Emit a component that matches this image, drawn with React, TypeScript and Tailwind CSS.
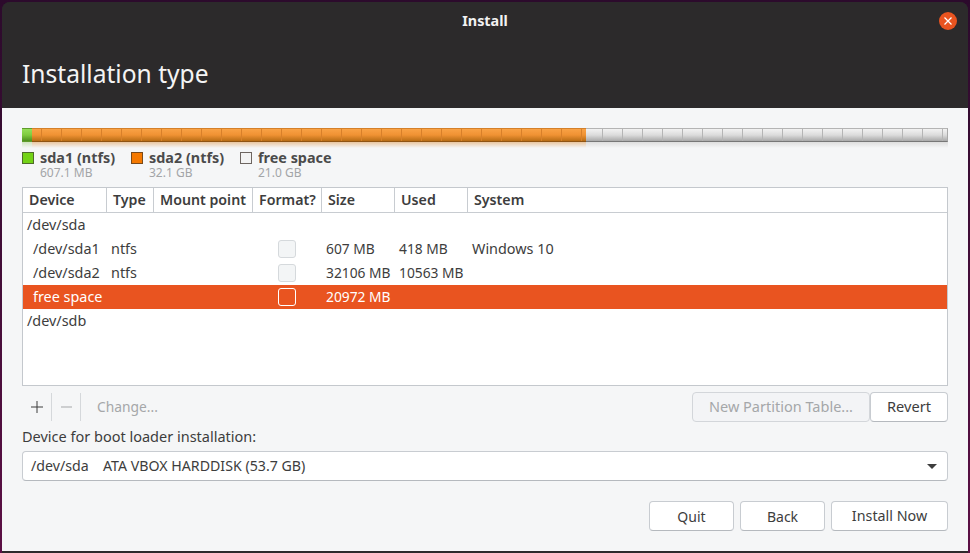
import React from "react";

const font = "font-['Noto_Sans','Open_Sans',sans-serif]";

const columns = "grid grid-cols-[84px_47px_99px_69px_73px_73px_1fr]";

const Checkbox = ({ selected }: { selected?: boolean }) => (
  <div className="flex justify-center -ml-[5px]">
    <div
      className={
        selected
          ? "w-[18px] h-[18px] rounded-[3px] border border-white bg-[#e95420]"
          : "w-[18px] h-[18px] rounded-[3px] border border-[#d5d9dc] bg-[#f3f5f6]"
      }
    />
  </div>
);

const Segment = ({ w, top, bottom, ticks, reflect }: { w: string; top: string; bottom: string; ticks: string; reflect: string }) => (
  <div className={w + " flex flex-col"}>
    <div className={"h-[14px] border-y " + top + " " + bottom}>
      <div className={"h-full " + ticks} />
    </div>
    <div className={"h-[6px] " + reflect} />
  </div>
);

const HeaderCell = ({ label, last }: { label: string; last?: boolean }) => (
  <div className={"px-[6px] flex items-center font-semibold text-[#3d3d3d] text-[14.2px] " + (last ? "" : "border-r border-[#c8ccd1]")}>
    {label}
  </div>
);

const Row = ({ cells, selected }: { cells: React.ReactNode[]; selected?: boolean }) => (
  <div className={columns + " h-6 items-center " + (selected ? "bg-[#e95420] text-white" : "text-[#3d3d3d]")}>
    {cells.map((c, i) => (
      <div key={i} className={"pl-[4px] whitespace-nowrap " + (i > 3 && i < 6 ? "text-[13.8px]" : "text-[14.4px]")}>
        {c}
      </div>
    ))}
  </div>
);

const Btn = ({ label, w, size, disabled }: { label: string; w: string; size: string; disabled?: boolean }) => (
  <button
    className={
      w +
      " " +
      size +
      " h-[30px] rounded-[4px] border text-center " +
      (disabled
        ? "border-[#d3d6da] bg-[#f3f4f6] text-[#a5a7a9]"
        : "border-[#c8ccd1] border-b-[#b5b9be] bg-white text-[#3d3d3d]")
    }
  >
    {label}
  </button>
);

export default function App() {
  return (
    <div className={"w-[970px] h-[553px] overflow-hidden bg-linear-to-b from-[#2c0a2c] to-[#5c0f45] px-[2px] pt-[2px] text-[14.4px] " + font}>
      <div className="h-[551px] flex flex-col rounded-t-[8px] overflow-hidden bg-[#2c2a2b]">
        <div className="h-[106px] shrink-0 bg-[#2c2a2b] text-white">
          <div className="h-[38px] flex items-center relative justify-center font-bold text-[#f2f2f2]">
            <span className="text-[14.4px]">Install</span>
            <div className="absolute right-[11px] top-[10px] w-[18px] h-[18px] rounded-full bg-[#e95420] flex items-center justify-center">
              <svg width="10" height="10" viewBox="0 0 10 10" fill="none" stroke="white" strokeWidth="1.3">
                <path d="M1.5 1.5l7 7M8.5 1.5l-7 7" />
              </svg>
            </div>
          </div>
          <div className="pl-5 pt-[16px] text-[24.6px] leading-[36px] text-[#f4f4f4]">Installation type</div>
        </div>

        <div className="h-[443px] bg-[#f5f6f7] px-5 pt-[20px]">
          <div className="flex">
            <Segment
              w="w-[10px]"
              top="border-[#5f9b2c]"
              bottom="bg-linear-to-b from-[#95de58] via-[#7fcb3f] to-[#4e8f1e]"
              ticks=""
              reflect="bg-linear-to-b from-[#cfe3bf] to-transparent"
            />
            <Segment
              w="w-[554px]"
              top="border-t-[#d4802a] border-b-[#8f5413]"
              bottom="bg-linear-to-b from-[#f9a245] via-[#f09233] to-[#b86d14]"
              ticks="bg-[repeating-linear-gradient(90deg,transparent_0,transparent_9px,#d8802a_9px,#d8802a_10px,transparent_10px,transparent_20px)]"
              reflect="bg-linear-to-b from-[#e9c6a0] to-transparent"
            />
            <Segment
              w="w-[362px]"
              top="border-t-[#b4b4b4] border-b-[#777777]"
              bottom="bg-linear-to-b from-[#f2f2f2] via-[#dcdcdc] to-[#a9a9a9] border-r border-r-[#a8a8a8]"
              ticks="bg-[repeating-linear-gradient(90deg,transparent_0,transparent_16px,#b5b5b5_16px,#b5b5b5_17px,transparent_17px,transparent_20px)]"
              reflect="bg-linear-to-b from-[#dedede] to-transparent"
            />
          </div>

          <div className="flex mt-[2px] h-[37px]">
            {[
              { name: "sda1 (ntfs)", size: "607.1 MB", w: "w-[109px]", box: "bg-[#73d216] border-[#4e6b2a]" },
              { name: "sda2 (ntfs)", size: "32.1 GB", w: "w-[109px]", box: "bg-[#f57900] border-[#7a4a1a]" },
              { name: "free space", size: "21.0 GB", w: "w-[120px]", box: "bg-[#f3f3f3] border-[#6d6560]" },
            ].map((p) => (
              <div key={p.name} className={p.w + " flex"}>
                <div className={"w-3 h-3 mt-[2px] border " + p.box} />
                <div className="ml-[6px]">
                  <div className="font-bold text-[14.4px] leading-[16px] text-[#4b4b4b]">{p.name}</div>
                  <div className="text-[12px] leading-[14px] text-[#a3a5a7]">{p.size}</div>
                </div>
              </div>
            ))}
          </div>

          <div className="h-[199px] border border-[#c4c8cd] bg-white">
            <div className={columns + " h-[25px] border-b border-[#c8ccd1]"}>
              <HeaderCell label="Device" />
              <HeaderCell label="Type" />
              <HeaderCell label="Mount point" />
              <HeaderCell label="Format?" />
              <HeaderCell label="Size" />
              <HeaderCell label="Used" />
              <HeaderCell label="System" last />
            </div>
            <Row cells={["/dev/sda"]} />
            <Row cells={[<span className="pl-[6px]">/dev/sda1</span>, "ntfs", "", <Checkbox />, "607 MB", "418 MB", "Windows 10"]} />
            <Row cells={[<span className="pl-[6px]">/dev/sda2</span>, "ntfs", "", <Checkbox />, "32106 MB", "10563 MB", ""]} />
            <Row selected cells={[<span className="pl-[6px]">free space</span>, "", "", <Checkbox selected />, "20972 MB", "", ""]} />
            <Row cells={["/dev/sdb"]} />
          </div>

          <div className="flex items-center h-[30px] mt-[6px]">
            <div className="w-[30px] h-[28px] flex items-center justify-center border-r border-[#d5d8db]">
              <svg width="12" height="12" viewBox="0 0 12 12" stroke="#3d3d3d" strokeWidth="1">
                <path d="M6 0v12M0 6h12" />
              </svg>
            </div>
            <div className="w-[29px] h-[28px] flex items-center justify-center border-r border-[#d5d8db]">
              <svg width="11" height="12" viewBox="0 0 11 12" stroke="#a5a7a9" strokeWidth="1">
                <path d="M0 6h11" />
              </svg>
            </div>
            <span className="ml-[16px] text-[#a5a7a9] text-[13.8px]">Change...</span>
            <div className="ml-auto flex">
              <Btn label="New Partition Table..." w="w-[178px]" size="text-[14.5px]" disabled />
              <Btn label="Revert" w="w-[78px]" size="text-[14.6px]" />
            </div>
          </div>

          <div className="mt-[2px] h-[24px] leading-[24px] text-[#3d3d3d] text-[14.5px]">Device for boot loader installation:</div>

          <div className="h-[30px] mt-[3px] flex items-center rounded-[4px] border border-[#c8ccd1] border-b-[#b5b9be] bg-white pl-[8px] pr-[10px] text-[#3d3d3d] text-[14.2px]">
            <span className="w-[72px]">/dev/sda</span>
            <span>ATA VBOX HARDDISK (53.7 GB)</span>
            <svg className="ml-auto" width="10" height="5" viewBox="0 0 10 5" fill="#3d3d3d">
              <path d="M0 0h10L5 5z" />
            </svg>
          </div>

          <div className="flex justify-end gap-[6px] mt-[20px]">
            <Btn label="Quit" w="w-[85px]" size="text-[14px]" />
            <Btn label="Back" w="w-[85px]" size="text-[14px]" />
            <Btn label="Install Now" w="w-[117px]" size="text-[14.3px]" />
          </div>
        </div>
      </div>
    </div>
  );
}
